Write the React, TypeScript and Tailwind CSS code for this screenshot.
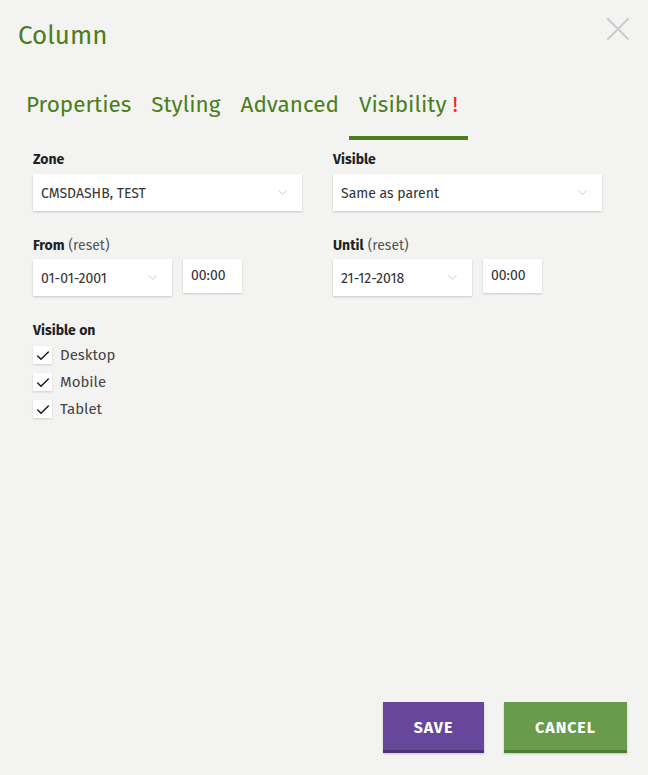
import { ChevronDown, Check, X } from "lucide-react";

const font = { fontFamily: "'Fira Sans', Roboto, 'Noto Sans', sans-serif" };

function Select({ value, w }: { value: string; w: string }) {
  return (
    <div className={`${w} h-[37px] bg-white shadow-[0_1px_2px_rgba(0,0,0,0.18)] flex items-center justify-between pl-2 pr-3 text-[14px] text-[#333]`}>
      <span className="mt-[2px]">{value}</span>
      <ChevronDown size={15} strokeWidth={1.4} className="text-[#c4c4c4]" />
    </div>
  );
}

function TimeBox() {
  return (
    <div className="w-[59px] h-[34px] bg-white shadow-[0_1px_2px_rgba(0,0,0,0.18)] flex items-center pl-2 text-[14px] text-[#333]">
      00:00
    </div>
  );
}

function CheckRow({ label }: { label: string }) {
  return (
    <div className="flex items-center h-[27px]">
      <div className="w-[19px] h-[18px] bg-white shadow-[0_1px_2px_rgba(0,0,0,0.15)] flex items-center justify-center">
        <Check size={16} strokeWidth={2} className="text-[#111] mt-[2px]" />
      </div>
      <span className="ml-[8px] text-[15px] text-[#444]">{label}</span>
    </div>
  );
}

export default function App() {
  return (
    <div className="w-[648px] h-[775px] bg-[#f3f4f1] flex flex-col" style={font}>
      <div className="flex justify-between items-start pl-[18px] pr-[10px] pt-[20px]">
        <h1 className="text-[26px] leading-[32px] text-[#4b7f1c]">Column</h1>
        <X size={40} strokeWidth={1.4} className="text-[#cdcdcd] mt-[-11px]" />
      </div>

      <div className="flex pl-[16px] mt-[36px] text-[22.5px] text-[#4b7f1c]">
        <div className="px-[10px] pb-[18px]">Properties</div>
        <div className="px-[10px] pb-[18px]">Styling</div>
        <div className="px-[10px] pb-[18px]">Advanced</div>
        <div className="px-[10px] pb-[14px] border-b-4 border-[#4b7f1c]">
          Visibility <span className="text-[#f2261a]">!</span>
        </div>
      </div>

      <div className="grid grid-cols-2 gap-x-[31px] px-[33px] mt-[9px] w-[635px]">
        <div>
          <div className="text-[14px] font-bold text-[#222] h-[25px]">Zone</div>
          <Select value="CMSDASHB, TEST" w="w-[269px]" />
          <div className="text-[14px] text-[#222] mt-[22px] h-[26px] flex items-center">
            <span className="font-bold">From</span>
            <span className="ml-1 text-[#555]">(reset)</span>
          </div>
          <div className="flex gap-[11px] items-start">
            <Select value="01-01-2001" w="w-[139px]" />
            <TimeBox />
          </div>
        </div>
        <div>
          <div className="text-[14px] font-bold text-[#222] h-[25px]">Visible</div>
          <Select value="Same as parent" w="w-[269px]" />
          <div className="text-[14px] text-[#222] mt-[22px] h-[26px] flex items-center">
            <span className="font-bold">Until</span>
            <span className="ml-1 text-[#555]">(reset)</span>
          </div>
          <div className="flex gap-[11px] items-start">
            <Select value="21-12-2018" w="w-[139px]" />
            <TimeBox />
          </div>
        </div>
      </div>

      <div className="px-[33px] mt-[24px]">
        <div className="text-[14px] font-bold text-[#222] h-[22px]">Visible on</div>
        <CheckRow label="Desktop" />
        <CheckRow label="Mobile" />
        <CheckRow label="Tablet" />
      </div>

      <div className="flex-1" />

      <div className="flex justify-end gap-[20px] pr-[21px] pb-[22px]">
        <button className="w-[101px] h-[51px] pt-[3px] bg-[#66479a] border-b-[3px] border-[#4e3479] text-white font-bold text-[16px] tracking-[0.06em] shadow-[0_1px_2px_rgba(0,0,0,0.2)]">
          SAVE
        </button>
        <button className="w-[123px] h-[51px] pt-[3px] bg-[#689b4c] border-b-[3px] border-[#4f7a37] text-white font-bold text-[16px] tracking-[0.06em] shadow-[0_1px_2px_rgba(0,0,0,0.2)]">
          CANCEL
        </button>
      </div>
    </div>
  );
}
